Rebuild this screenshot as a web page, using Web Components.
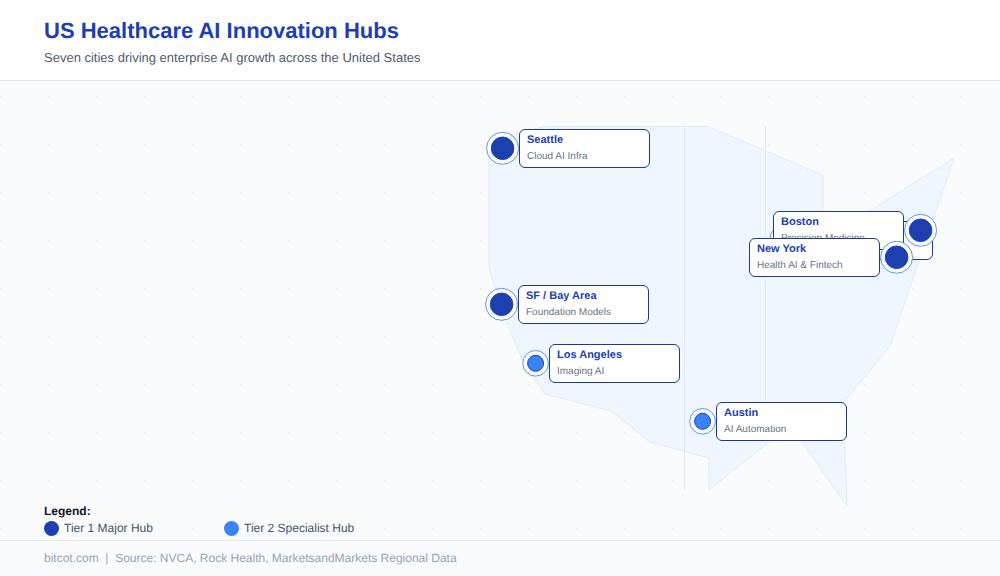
<!DOCTYPE html>
<html>
<head>
<meta charset="utf-8">
<style>
  html, body { margin: 0; padding: 0; }
  body { width: 1000px; height: 576px; overflow: hidden; font-family: "Liberation Sans", Arial, sans-serif; }
</style>
</head>
<body>
<hub-page></hub-page>

<template id="tpl-page">
  <style>
    :host {
      display: flex;
      flex-direction: column;
      width: 1000px;
      height: 576px;
      text-rendering: geometricPrecision;
      background-color: #f9fbfd;
      background-image: radial-gradient(circle at 1px 1px, #e8edf3 1px, transparent 1px);
      background-size: 48px 48px;
    }
    .stage { flex: 1; min-height: 0; position: relative; }
  </style>
  <hub-header heading="US Healthcare AI Innovation Hubs" subtitle="Seven cities driving enterprise AI growth across the United States"></hub-header>
  <div class="stage">
    <hub-map></hub-map>
    <hub-marker style="left:786px;top:159px" name="" note=""></hub-marker>
    <hub-marker style="left:503px;top:67px" name="Seattle" note="Cloud AI Infra"></hub-marker>
    <hub-marker style="left:921px;top:149px" name="Boston" note="Precision Medicine" flip></hub-marker>
    <hub-marker style="left:897px;top:176px" name="New York" note="Health AI &amp; Fintech" flip></hub-marker>
    <hub-marker style="left:502px;top:223px" name="SF / Bay Area" note="Foundation Models"></hub-marker>
    <hub-marker style="left:536px;top:282px" name="Los Angeles" note="Imaging AI" tier="2"></hub-marker>
    <hub-marker style="left:703px;top:340px" name="Austin" note="AI Automation" tier="2"></hub-marker>
  </div>
  <hub-legend></hub-legend>
  <hub-footer>bitcot.com &nbsp;|&nbsp; Source: NVCA, Rock Health, MarketsandMarkets Regional Data</hub-footer>
</template>

<template id="tpl-header">
  <style>
    :host {
      display: block;
      height: 80px;
      padding: 0 44px;
      background: #fff;
      border-bottom: 1px solid #e2e8f0;
    }
    h1 { margin: 0; padding-top: 18px; font-size: 22px; line-height: 26px; font-weight: 700; color: #1e40af; }
    p { margin: 6px 0 0; font-size: 13px; line-height: 15px; color: #525b6b; }
  </style>
  <h1></h1>
  <p></p>
</template>

<template id="tpl-map">
  <style>
    :host { position: absolute; left: 0; top: -81px; width: 1000px; height: 576px; display: block; }
    svg { display: block; }
  </style>
  <svg width="1000" height="576" viewBox="0 0 1000 576">
    <path d="M489 140 L545 126.5 L708 126.5 L823 175 L823 240 L954 158 L890 346 L843 403 L847 506 L790 425 L709 490 L709 458 L650 442 L611 411 L545 394 L523 362 L505 318 L489 268 Z" fill="#eff6ff" stroke="#e0eafa" stroke-width="1"/>
    <path d="M684.5 126 V490 M765.5 126 V441" fill="none" stroke="#e2e8f0" stroke-width="1"/>
  </svg>
</template>

<template id="tpl-marker">
  <style>
    :host { position: absolute; display: block; width: 0; height: 0; }
    svg { position: absolute; left: -20px; top: -20px; overflow: visible; }
    .ring { fill: #fff; stroke: #5a96f0; stroke-width: 1; }
    .dot { fill: #1e40af; stroke: #1e40af; stroke-width: 1; }
    :host([tier="2"]) .dot { fill: #3b82f6; }
    .card {
      position: absolute;
      left: 16px;
      top: -19px;
      box-sizing: border-box;
      width: 131px;
      height: 39px;
      padding: 3px 7px;
      background: #fff;
      border: 1px solid #1e3a8a;
      border-radius: 6px;
    }
    :host([tier="2"]) .card { left: 13px; }
    :host([flip]) .card { left: -148px; }
    .name { font-size: 11px; line-height: 14px; font-weight: 700; color: #1e40af; white-space: nowrap; }
    .note { margin-top: 4px; font-size: 10px; line-height: 12px; color: #6b7280; white-space: nowrap; }
  </style>
  <svg width="40" height="40" viewBox="0 0 40 40">
    <g transform="translate(19.6 20.3)">
      <circle class="ring" r="16"></circle>
      <circle class="dot" r="11.3"></circle>
    </g>
  </svg>
  <div class="card"><div class="name"></div><div class="note"></div></div>
</template>

<template id="tpl-legend">
  <style>
    :host { display: block; height: 36px; padding: 0 44px; }
    .title { font-size: 12px; line-height: 14px; font-weight: 700; color: #111827; }
    .items { display: flex; margin-top: 2px; }
    .item { display: flex; align-items: center; gap: 5px; width: 180px; font-size: 12px; line-height: 16px; color: #475569; }
    .swatch { width: 15px; height: 15px; border-radius: 50%; background: #1e40af; }
    .swatch.t2 { background: #3b82f6; }
  </style>
  <div class="title">Legend:</div>
  <div class="items">
    <div class="item"><span class="swatch"></span>Tier 1 Major Hub</div>
    <div class="item"><span class="swatch t2"></span>Tier 2 Specialist Hub</div>
  </div>
</template>

<template id="tpl-footer">
  <style>
    :host {
      display: block;
      height: 35px;
      padding: 0 44px;
      border-top: 1px solid #e2e8f0;
      font-size: 12px;
      line-height: 34px;
      color: #94a3b8;
    }
  </style>
  <slot></slot>
</template>

<script>
function makeRoot(el, id) {
  const root = el.attachShadow({ mode: 'open' });
  root.appendChild(document.getElementById(id).content.cloneNode(true));
  return root;
}

class HubPage extends HTMLElement {
  constructor() { super(); makeRoot(this, 'tpl-page'); }
}

class HubHeader extends HTMLElement {
  connectedCallback() {
    if (this.shadowRoot) return;
    const root = makeRoot(this, 'tpl-header');
    root.querySelector('h1').textContent = this.getAttribute('heading');
    root.querySelector('p').textContent = this.getAttribute('subtitle');
  }
}

class HubMap extends HTMLElement {
  constructor() { super(); makeRoot(this, 'tpl-map'); }
}

class HubMarker extends HTMLElement {
  connectedCallback() {
    if (this.shadowRoot) return;
    const root = makeRoot(this, 'tpl-marker');
    root.querySelector('.name').textContent = this.getAttribute('name');
    root.querySelector('.note').textContent = this.getAttribute('note');
    // tier 2 hubs are drawn smaller
    if (this.getAttribute('tier') === '2') {
      root.querySelector('.ring').setAttribute('r', '12.8');
      root.querySelector('.dot').setAttribute('r', '8');
    }
  }
}

class HubLegend extends HTMLElement {
  constructor() { super(); makeRoot(this, 'tpl-legend'); }
}

class HubFooter extends HTMLElement {
  constructor() { super(); makeRoot(this, 'tpl-footer'); }
}

customElements.define('hub-header', HubHeader);
customElements.define('hub-map', HubMap);
customElements.define('hub-marker', HubMarker);
customElements.define('hub-legend', HubLegend);
customElements.define('hub-footer', HubFooter);
customElements.define('hub-page', HubPage);
</script>
</body>
</html>
